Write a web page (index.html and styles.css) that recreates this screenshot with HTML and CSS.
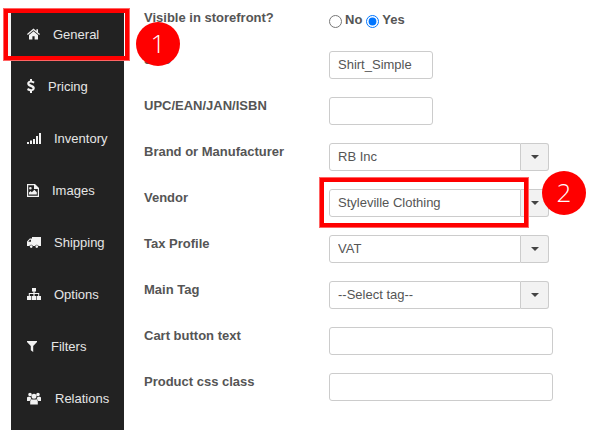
FILE: index.html
```html
<!DOCTYPE html>
<html lang="en">
<head>
    <meta charset="UTF-8"/>
    <title>Product</title>
    <link rel="stylesheet" href="styles.css">
</head>
<body>
<div class="page">
    <ul class="tabs">
        <li class="tab active">
            <svg class="ico" width="13" height="12" viewBox="0 0 13 12"><path d="M6.5 0.6 L9.4 3 V1.2 H11 V4.4 L13 6 L12.2 6.9 L6.5 2.2 L0.8 6.9 L0 6 Z M2 7 L6.5 3.3 L11 7 V11.5 H7.6 V8.2 H5.4 V11.5 H2 Z"/></svg>
            <span class="tab-name">General</span>
        </li>
        <li class="tab">
            <svg class="ico" width="8" height="14" viewBox="0 0 8 14"><path d="M3 0 H5 V1.7 C6.2 1.9 7 2.3 7.6 2.7 L6.7 4.5 C5.6 3.9 4.6 3.6 3.6 3.6 C2.8 3.6 2.4 3.9 2.4 4.3 C2.4 5 3.6 5.3 5 5.9 C6.7 6.6 7.8 7.4 7.8 9.1 C7.8 10.7 6.7 11.8 5 12.1 V14 H3 V12.2 C1.8 12 0.8 11.6 0 11 L1 9.1 C2 9.8 3.2 10.2 4.2 10.2 C5 10.2 5.5 9.9 5.5 9.4 C5.5 8.7 4.4 8.4 3 7.8 C1.3 7.1 0.2 6.3 0.2 4.6 C0.2 3.1 1.3 2 3 1.7 Z"/></svg>
            <span class="tab-name">Pricing</span>
        </li>
        <li class="tab">
            <svg class="ico" width="14" height="11" viewBox="0 0 14 11"><path d="M0 9 H2 V11 H0 Z M3 7.5 H5 V11 H3 Z M6 6 H8 V11 H6 Z M9 3 H11 V11 H9 Z M12 0 H14 V11 H12 Z"/></svg>
            <span class="tab-name">Inventory</span>
        </li>
        <li class="tab">
            <svg class="ico" width="12" height="13" viewBox="0 0 12 13"><path fill-rule="evenodd" d="M0 0 H8 L12 4 V13 H0 Z M1.2 1.2 V11.8 H10.8 V5 H7 V1.2 Z M3.4 3 A1.3 1.3 0 1 1 3.4 5.6 A1.3 1.3 0 1 1 3.4 3 Z M2 10.6 V8.6 L3.6 7 L4.8 8.2 L7.4 5.8 L9.8 8.2 V10.6 Z"/></svg>
            <span class="tab-name">Images</span>
        </li>
        <li class="tab">
            <svg class="ico" width="14" height="11" viewBox="0 0 14 11"><path fill-rule="evenodd" d="M5 0 H14 V9 H11.6 A2 2 0 0 0 8 9 H6 A2 2 0 0 0 2.4 9 H0 V4.6 L2.8 1.6 H5 Z M2.9 2.8 L1.2 4.8 H4 V2.8 Z M4.2 8.2 A1.2 1.2 0 1 1 4.2 10.9 A1.2 1.2 0 1 1 4.2 8.2 Z M9.8 8.2 A1.2 1.2 0 1 1 9.8 10.9 A1.2 1.2 0 1 1 9.8 8.2 Z"/></svg>
            <span class="tab-name">Shipping</span>
        </li>
        <li class="tab">
            <svg class="ico" width="14" height="12" viewBox="0 0 14 12"><path d="M5 0 H9 V3.6 H7.6 V5 H12.2 V8 H14 V12 H9.6 V8 H11.2 V6 H7.6 V8 H9 V12 H5 V8 H6.4 V6 H2.8 V8 H4.4 V12 H0 V8 H1.8 V5 H6.4 V3.6 H5 Z"/></svg>
            <span class="tab-name">Options</span>
        </li>
        <li class="tab">
            <svg class="ico" width="10" height="11" viewBox="0 0 10 11"><path d="M0 0 H10 V1 L6.2 5 V11 L3.8 9.2 V5 L0 1 Z"/></svg>
            <span class="tab-name tab-name-far">Filters</span>
        </li>
        <li class="tab">
            <svg class="ico" width="14" height="13" viewBox="0 0 14 12"><path d="M3 0.2 A1.8 1.8 0 1 1 3 3.8 A1.8 1.8 0 1 1 3 0.2 Z M11 0.2 A1.8 1.8 0 1 1 11 3.8 A1.8 1.8 0 1 1 11 0.2 Z M7 1.2 A2.5 2.5 0 1 1 7 6.2 A2.5 2.5 0 1 1 7 1.2 Z M0 5 C0.4 4.2 1.4 4.2 3.6 4.4 C3.7 5.4 4 6.2 4.6 6.8 C3.6 7 3 7.6 2.8 8.4 H0 Z M14 5 C13.6 4.2 12.6 4.2 10.4 4.4 C10.3 5.4 10 6.2 9.4 6.8 C10.4 7 11 7.6 11.2 8.4 H14 Z M4.6 7 H9.4 C10.4 7 10.8 8 10.8 9.2 V12 H3.2 V9.2 C3.2 8 3.6 7 4.6 7 Z"/></svg>
            <span class="tab-name tab-name-far">Relations</span>
        </li>
    </ul>

    <form class="form">
        <div class="row row-first">
            <label class="lbl">Visible in storefront?</label>
            <div class="radios">
                <input type="radio" name="visible" id="visNo">
                <label for="visNo">No</label>
                <input type="radio" name="visible" id="visYes" checked>
                <label for="visYes">Yes</label>
            </div>
        </div>
        <div class="row">
            <label class="lbl">SKU</label>
            <input class="field short" type="text" value="Shirt_Simple">
        </div>
        <div class="row">
            <label class="lbl">UPC/EAN/JAN/ISBN</label>
            <input class="field short" type="text">
        </div>
        <div class="row">
            <label class="lbl">Brand or Manufacturer</label>
            <div class="combo">
                <input class="combo-text" type="text" value="RB Inc">
                <span class="combo-btn"><i class="caret"></i></span>
            </div>
        </div>
        <div class="row">
            <label class="lbl">Vendor</label>
            <div class="combo">
                <input class="combo-text" type="text" value="Styleville Clothing">
                <span class="combo-btn"><i class="caret"></i></span>
            </div>
        </div>
        <div class="row">
            <label class="lbl">Tax Profile</label>
            <div class="combo">
                <input class="combo-text" type="text" value="VAT">
                <span class="combo-btn"><i class="caret"></i></span>
            </div>
        </div>
        <div class="row">
            <label class="lbl">Main Tag</label>
            <div class="combo">
                <input class="combo-text" type="text" value="--Select tag--">
                <span class="combo-btn"><i class="caret"></i></span>
            </div>
        </div>
        <div class="row">
            <label class="lbl">Cart button text</label>
            <input class="field wide" type="text">
        </div>
        <div class="row">
            <label class="lbl">Product css class</label>
            <input class="field wide" type="text">
        </div>
    </form>
</div>

<!-- annotations drawn over the screenshot -->
<div class="mark mark-general"></div>
<div class="mark mark-vendor"></div>
<div class="badge badge-one">1</div>
<div class="badge badge-two">2</div>
</body>
</html>
```

FILE: styles.css
```css
html, body {
    margin: 0;
    height: 430px;
    overflow: hidden;
    background: #fff;
}
body {
    position: relative;
    font-family: "Liberation Sans", Arial, sans-serif;
    font-size: 13px;
    color: #555;
}
.page {
    display: flex;
    align-items: flex-start;
    padding-left: 11px;
}
.tabs {
    list-style: none;
    margin: 8px 0 0;
    padding: 0;
    width: 113px;
    height: 422px;
    background: #222;
    flex: none;
}
.tab {
    display: flex;
    align-items: center;
    height: 52px;
    padding-left: 16px;
    color: #e6e6e6;
}
.tab.active {
    box-shadow: -3px 0 0 #f4f4f4;
}
.ico {
    fill: #f2f2f2;
    flex: none;
}
.tab-name {
    margin-left: 13px;
    font-size: 13px;
}
.tab-name-far {
    margin-left: 14px;
}
.form {
    margin-left: 20px;
    flex: 1;
}
.row {
    display: flex;
    align-items: flex-start;
    height: 46px;
}
.row-first {
    height: 51px;
}
.lbl {
    width: 185px;
    flex: none;
    font-weight: bold;
    line-height: 18px;
}
.row-first .lbl {
    margin-top: 9px;
}
.radios {
    display: flex;
    align-items: center;
    margin-top: 11px;
    font-weight: bold;
    line-height: 18px;
}
.radios input {
    margin: 2px 3px 0 0;
    width: 13px;
    height: 13px;
}
.radios label {
    margin-right: 4px;
}
.field, .combo-text {
    box-sizing: border-box;
    height: 28px;
    padding: 0 8px 2px;
    border: 1px solid #ccc;
    border-radius: 3px;
    font-family: inherit;
    font-size: 13px;
    color: #555;
    background: #fff;
}
.short {
    width: 104px;
}
.wide {
    width: 224px;
}
.combo {
    display: flex;
    width: 220px;
}
.combo-text {
    width: 192px;
    border-radius: 3px 0 0 3px;
}
.combo-btn {
    box-sizing: border-box;
    display: flex;
    align-items: center;
    justify-content: center;
    width: 28px;
    height: 28px;
    border: 1px solid #ccc;
    border-left: 0;
    border-radius: 0 3px 3px 0;
    background: #f2f2f2;
}
.caret {
    width: 0;
    height: 0;
    margin-bottom: 1px;
    border-top: 4px solid #444;
    border-left: 4px solid transparent;
    border-right: 4px solid transparent;
}
.mark {
    position: absolute;
    box-sizing: border-box;
    border: 4px solid #f00;
    box-shadow: 0 0 0 1px #ff6464;
}
.mark-general {
    left: 4px;
    top: 9px;
    width: 125px;
    height: 51px;
}
.mark-vendor {
    left: 320px;
    top: 178px;
    width: 208px;
    height: 49px;
}
.badge {
    position: absolute;
    width: 44px;
    height: 44px;
    border-radius: 50%;
    background: #f00;
    color: #fff;
    font-family: "Open Sans", sans-serif;
    font-size: 26px;
    font-weight: 300;
    line-height: 43px;
    text-align: center;
}
.badge-one {
    left: 136px;
    top: 22px;
}
.badge-two {
    left: 542px;
    top: 171px;
}
```
